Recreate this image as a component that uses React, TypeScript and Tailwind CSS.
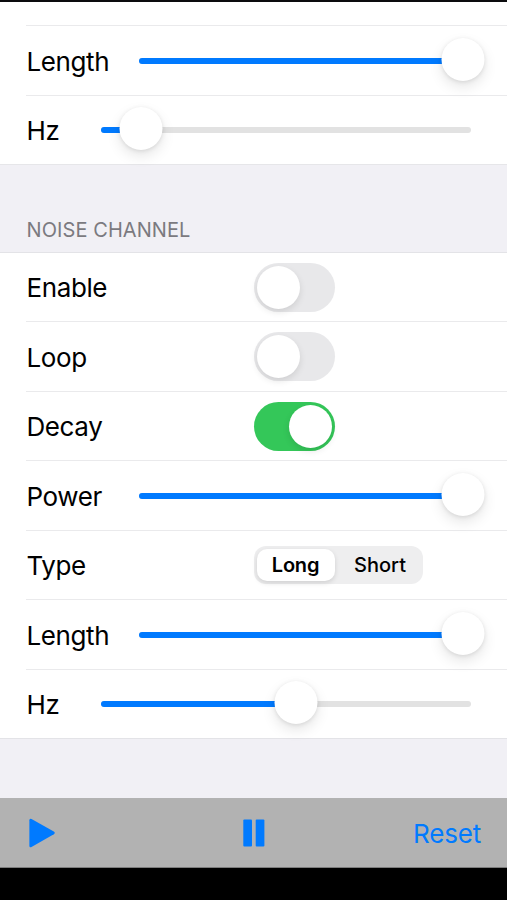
import { useState } from 'react'
import type { ReactNode } from 'react'

export default function App() {
  const [enabled, setEnabled] = useState(false)
  const [loop, setLoop] = useState(false)
  const [decay, setDecay] = useState(true)
  const [type, setType] = useState('Long')

  return (
    <div className="flex h-[900px] w-[507px] flex-col overflow-hidden border-t-2 border-[#0c0c0e] bg-[#f1f0f5] font-['Inter','Liberation_Sans',sans-serif] text-[26px] text-black">
      <section className="border-b border-[#e6e6e9] bg-white">
        <div className="ml-[26px] h-[23px]" />
        <Row label="Length">
          <Slider thumb={324.8} />
        </Row>
        <Row label="Hz" short>
          <Slider thumb={40.5} />
        </Row>
      </section>

      <h2 className="flex h-[87px] items-end pb-[11px] pl-[26.5px] text-[20px] leading-[22px] tracking-[0.08px] text-[#7b7a80]">
        NOISE CHANNEL
      </h2>

      <section className="border-y border-[#e3e3e7] bg-white">
        <Row label="Enable" first>
          <Toggle on={enabled} onChange={setEnabled} />
        </Row>
        <Row label="Loop">
          <Toggle on={loop} onChange={setLoop} />
        </Row>
        <Row label="Decay">
          <Toggle on={decay} onChange={setDecay} />
        </Row>
        <Row label="Power">
          <Slider thumb={324.8} />
        </Row>
        <Row label="Type">
          <Segmented options={['Long', 'Short']} value={type} onChange={setType} />
        </Row>
        <Row label="Length">
          <Slider thumb={324.8} />
        </Row>
        <Row label="Hz" short>
          <Slider thumb={195.5} />
        </Row>
      </section>

      <div className="grow" />

      <footer className="flex h-[70px] shrink-0 items-center justify-between border-b border-[#7c7c7c] bg-[#b2b2b2] pl-[29px] pr-[26px] pt-px text-[#007aff]">
        <button aria-label="Play" className="w-[66px]">
          <svg width="27" height="30" viewBox="0 0 27 30" fill="currentColor">
            <path d="M0.4 2.2Q0.4 0 2.5 1L24.8 13.5Q26.8 14.9 24.8 16.3L2.5 29Q0.4 30 0.4 27.8Z" />
          </svg>
        </button>
        <button aria-label="Pause">
          <svg width="22" height="28" viewBox="0 0 22 28" fill="currentColor">
            <rect x="0.3" y="0.5" width="8.7" height="27" rx="1" />
            <rect x="12.7" y="0.5" width="8.7" height="27" rx="1" />
          </svg>
        </button>
        <button className="w-[68px] tracking-[-0.2px]">Reset</button>
      </footer>
      <div className="h-8 shrink-0 bg-black" />
    </div>
  )
}

function Row({
  label,
  children,
  short = false,
  first = false,
}: {
  label: string
  children: ReactNode
  short?: boolean
  first?: boolean
}) {
  return (
    <div
      className={`ml-[26px] flex items-center ${first ? 'h-[68px]' : 'h-[69.5px] border-t border-[#eaeaec] pt-px'}`}
    >
      <span
        className={`shrink-0 pl-[0.5px] pt-px tracking-[-0.4px] ${short ? 'w-[74.5px]' : 'w-[112.5px]'}`}
      >
        {label}
      </span>
      {children}
    </div>
  )
}

// thumb is the centre of the knob, measured from the start of the track
function Slider({ thumb }: { thumb: number }) {
  return (
    <div className="relative mr-[36.5px] h-1.5 grow rounded-full bg-[#e2e2e2]">
      <div className="h-full rounded-full bg-[#007aff]" style={{ width: thumb }} />
      <div
        className="absolute -top-5 size-[43px] -translate-x-1/2 rounded-full bg-white shadow-[0_6px_14px_rgba(0,0,0,0.1),0_1px_4px_rgba(0,0,0,0.1)]"
        style={{ left: thumb }}
      />
    </div>
  )
}

function Toggle({ on, onChange }: { on: boolean; onChange: (v: boolean) => void }) {
  return (
    <button
      role="switch"
      aria-checked={on}
      onClick={() => onChange(!on)}
      className={`ml-[115px] flex h-[49px] w-[81px] items-center rounded-full px-[3px] ${
        on ? 'justify-end bg-[#34c759]' : 'bg-[#e8e8ea]'
      }`}
    >
      <span className="size-[43px] rounded-full bg-white shadow-[0_3px_7px_rgba(0,0,0,0.11)]" />
    </button>
  )
}

function Segmented({
  options,
  value,
  onChange,
}: {
  options: string[]
  value: string
  onChange: (v: string) => void
}) {
  return (
    <div className="ml-[115px] flex h-[38px] w-[169px] rounded-[12px] bg-[#eeeeef] p-[3px] text-[20px] font-medium">
      {options.map(o => (
        <button
          key={o}
          onClick={() => onChange(o)}
          className={`rounded-[10px] ${
            o === value
              ? 'w-[78px] bg-white font-semibold tracking-[-0.2px] shadow-[0_2px_5px_rgba(0,0,0,0.13)]'
              : 'grow pl-1.5'
          }`}
        >
          {o}
        </button>
      ))}
    </div>
  )
}
